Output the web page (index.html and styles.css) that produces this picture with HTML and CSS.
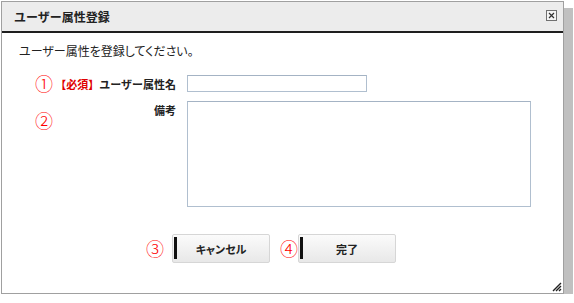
FILE: index.html
```html
<!DOCTYPE html>
<html lang="ja">
<head>
    <meta charset="UTF-8" />
    <title>ユーザー属性登録</title>
    <link rel="stylesheet" href="styles.css">
</head>
<body>
    <div class="dialog">
        <div class="titlebar">
            <span class="title">ユーザー属性登録</span>
            <svg class="close" width="11" height="11" viewBox="0 0 11 11">
                <rect x="0.5" y="0.5" width="10" height="10" fill="#f4f4f4" stroke="#707070" />
                <path d="M3 3 L8 8 M8 3 L3 8" stroke="#303030" stroke-width="1.2" />
            </svg>
        </div>
        <div class="content">
            <p class="message">ユーザー属性を登録してください。</p>
            <div class="row row-name">
                <span class="num">①</span>
                <label class="label" for="attrName"><span class="req">【必須】</span>ユーザー属性名</label>
                <input type="text" id="attrName" class="field" />
            </div>
            <div class="row row-note">
                <span class="num">②</span>
                <label class="label" for="note">備考</label>
                <textarea id="note" class="field area"></textarea>
            </div>
            <div class="buttons">
                <span class="num">③</span>
                <button type="button" class="btn">キャンセル</button>
                <span class="num num-4">④</span>
                <button type="button" class="btn">完了</button>
            </div>
        </div>
        <svg class="grip" width="10" height="10" viewBox="0 0 10 10">
            <path d="M1 9 L9 1 M4 9 L9 4 M7 9 L9 7" stroke="#202020" stroke-width="1.4" />
        </svg>
    </div>
</body>
</html>
```

FILE: styles.css
```css
body {
    margin: 0;
    background-color: white;
    font-family: "Noto Sans CJK JP", sans-serif;
    color: #222;
}
.dialog {
    position: relative;
    box-sizing: border-box;
    width: 563px;
    height: 293px;
    margin: 1px 0 0 1px;
    border: 1px solid #a0a0a0;
    background-color: white;
    box-shadow: 8px 8px 0 1px #c0c0c0;
    display: flex;
    flex-direction: column;
}
.titlebar {
    height: 29px;
    background-color: #ececec;
    border-bottom: 2px solid #1e1e1e;
    display: flex;
    align-items: center;
    justify-content: space-between;
    padding: 0 6px 0 12px;
}
.title {
    font-size: 12px;
    font-weight: bold;
    line-height: 16px;
}
.close {
    display: block;
    margin-top: -2px;
}
.content {
    padding-top: 10px;
}
.message {
    margin: 0 0 16px 17px;
    font-size: 12px;
    line-height: 16px;
    font-feature-settings: "palt";
}
.row {
    display: flex;
    margin-bottom: 9px;
}
.row-name {
    align-items: center;
}
.num {
    width: 18px;
    margin-left: 33px;
    color: #f00;
    font-size: 18px;
    font-weight: 300;
    line-height: 17px;
    text-align: center;
}
.row-note .num {
    margin-top: 11px;
}
.label {
    width: 123px;
    margin-right: 11px;
    text-align: right;
    font-size: 11px;
    font-weight: bold;
    line-height: 16px;
}
.row-note .label {
    margin-top: 1px;
}
.req {
    color: #e00000;
}
.field {
    box-sizing: border-box;
    width: 180px;
    height: 17px;
    margin: 0;
    border: 1px solid #b0bfcf;
    border-top-color: #a4b3c4;
    padding: 1px 3px;
    font-family: inherit;
    font-size: 11px;
}
.area {
    width: 344px;
    height: 106px;
    resize: none;
}
.buttons {
    display: flex;
    align-items: center;
    margin-top: 27px;
}
.buttons .num {
    margin-left: 144px;
    margin-right: 8px;
}
.buttons .num-4 {
    margin-left: 10px;
    margin-right: 0;
}
.btn {
    box-sizing: border-box;
    width: 98px;
    height: 29px;
    border: 1px solid #d6d6d6;
    border-radius: 2px;
    background:
        linear-gradient(#111, #111) 1px 2px / 3px 22px no-repeat,
        linear-gradient(#fbfbfb, #e8e8e8);
    font-family: inherit;
    font-size: 11px;
    font-weight: bold;
    color: #222;
    font-feature-settings: "palt";
    padding: 0;
}
.grip {
    position: absolute;
    right: 1px;
    bottom: 1px;
}
```
